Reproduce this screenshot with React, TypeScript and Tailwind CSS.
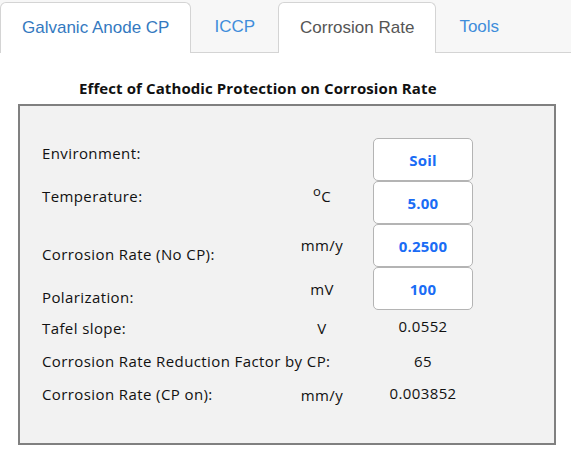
import React from "react";

const tabs = [
  { name: "Galvanic Anode CP", boxed: true, color: "text-[#3479bf]" },
  { name: "ICCP", boxed: false, color: "text-[#3f8ddb]" },
  { name: "Corrosion Rate", boxed: true, color: "text-[#555555]" },
  { name: "Tools", boxed: false, color: "text-[#3f8ddb]" },
];

function InputBox({ value }: { value: string }) {
  return (
    <div className="w-[100px] h-[43px] bg-white border border-[#b4b4b4] rounded-[5px] flex items-center justify-center font-bold text-[#1a6cf5] tracking-[0.2px]">
      {value}
    </div>
  );
}

export default function App() {
  return (
    <div className="w-[571px] h-[453px] bg-white overflow-hidden" style={{ fontFamily: "'Open Sans', 'Noto Sans', sans-serif" }}>
      {/* tab strip */}
      <div className="flex h-[53px] pt-[2px] bg-[#f7f7f7] border-b border-[#d4d4d4]" style={{ fontFamily: "'Liberation Sans', Arial, sans-serif" }}>
        {tabs.map((t) =>
          t.boxed ? (
            <div
              key={t.name}
              className={`h-[51px] -mb-px px-[21px] bg-white border border-b-0 border-[#d4d4d4] rounded-t-[6px] flex items-center text-[17px] ${t.color}`}
            >
              {t.name}
            </div>
          ) : (
            <div key={t.name} className={`h-[50px] px-[23px] flex items-center text-[17px] ${t.color}`}>
              {t.name}
            </div>
          )
        )}
      </div>

      <div className="pl-[18px] pr-[16px]">
        <div className="h-[51px] pl-[61px] pt-[25px] text-[15px] font-bold text-[#111] leading-[20px] tracking-[0.1px]">
          Effect of Cathodic Protection on Corrosion Rate
        </div>

        <div className="w-[538px] h-[341px] bg-[#f2f2f2] border-2 border-[#808080] pt-[32px] pl-[22px] text-[15px] text-[#111] leading-[20px] tracking-[0.4px]">
          {/* input rows */}
          <div className="grid grid-cols-[250px_60px_21px_100px] h-[43px]">
            <div className="mt-[5px]">Environment:</div>
            <div></div>
            <div></div>
            <InputBox value="Soil" />
          </div>
          <div className="grid grid-cols-[250px_60px_21px_100px] h-[43px]">
            <div className="mt-[5px]">Temperature:</div>
            <div className="mt-[5px] text-center">
              <sup className="text-[13px] top-[-6px]">o</sup>C
            </div>
            <div></div>
            <InputBox value="5.00" />
          </div>
          <div className="grid grid-cols-[250px_60px_21px_100px] h-[43px]">
            <div className="mt-[20px]">Corrosion Rate (No CP):</div>
            <div className="mt-[11px] text-center">mm/y</div>
            <div></div>
            <InputBox value="0.2500" />
          </div>
          <div className="grid grid-cols-[250px_60px_21px_100px] h-[43px]">
            <div className="mt-[20px]">Polarization:</div>
            <div className="mt-[12px] text-center">mV</div>
            <div></div>
            <InputBox value="100" />
          </div>

          {/* output rows */}
          <div className="grid grid-cols-[250px_60px_21px_100px] h-[33px] mt-[8px]">
            <div>Tafel slope:</div>
            <div className="text-center">V</div>
            <div></div>
            <div className="text-center -mt-[2px]">0.0552</div>
          </div>
          <div className="grid grid-cols-[250px_60px_21px_100px] h-[33px]">
            <div className="whitespace-nowrap">Corrosion Rate Reduction Factor by CP:</div>
            <div></div>
            <div></div>
            <div className="text-center">65</div>
          </div>
          <div className="grid grid-cols-[250px_60px_21px_100px] h-[33px]">
            <div>Corrosion Rate (CP on):</div>
            <div className="text-center mt-[1px]">mm/y</div>
            <div></div>
            <div className="text-center -mt-[1px]">0.003852</div>
          </div>
        </div>
      </div>
    </div>
  );
}
